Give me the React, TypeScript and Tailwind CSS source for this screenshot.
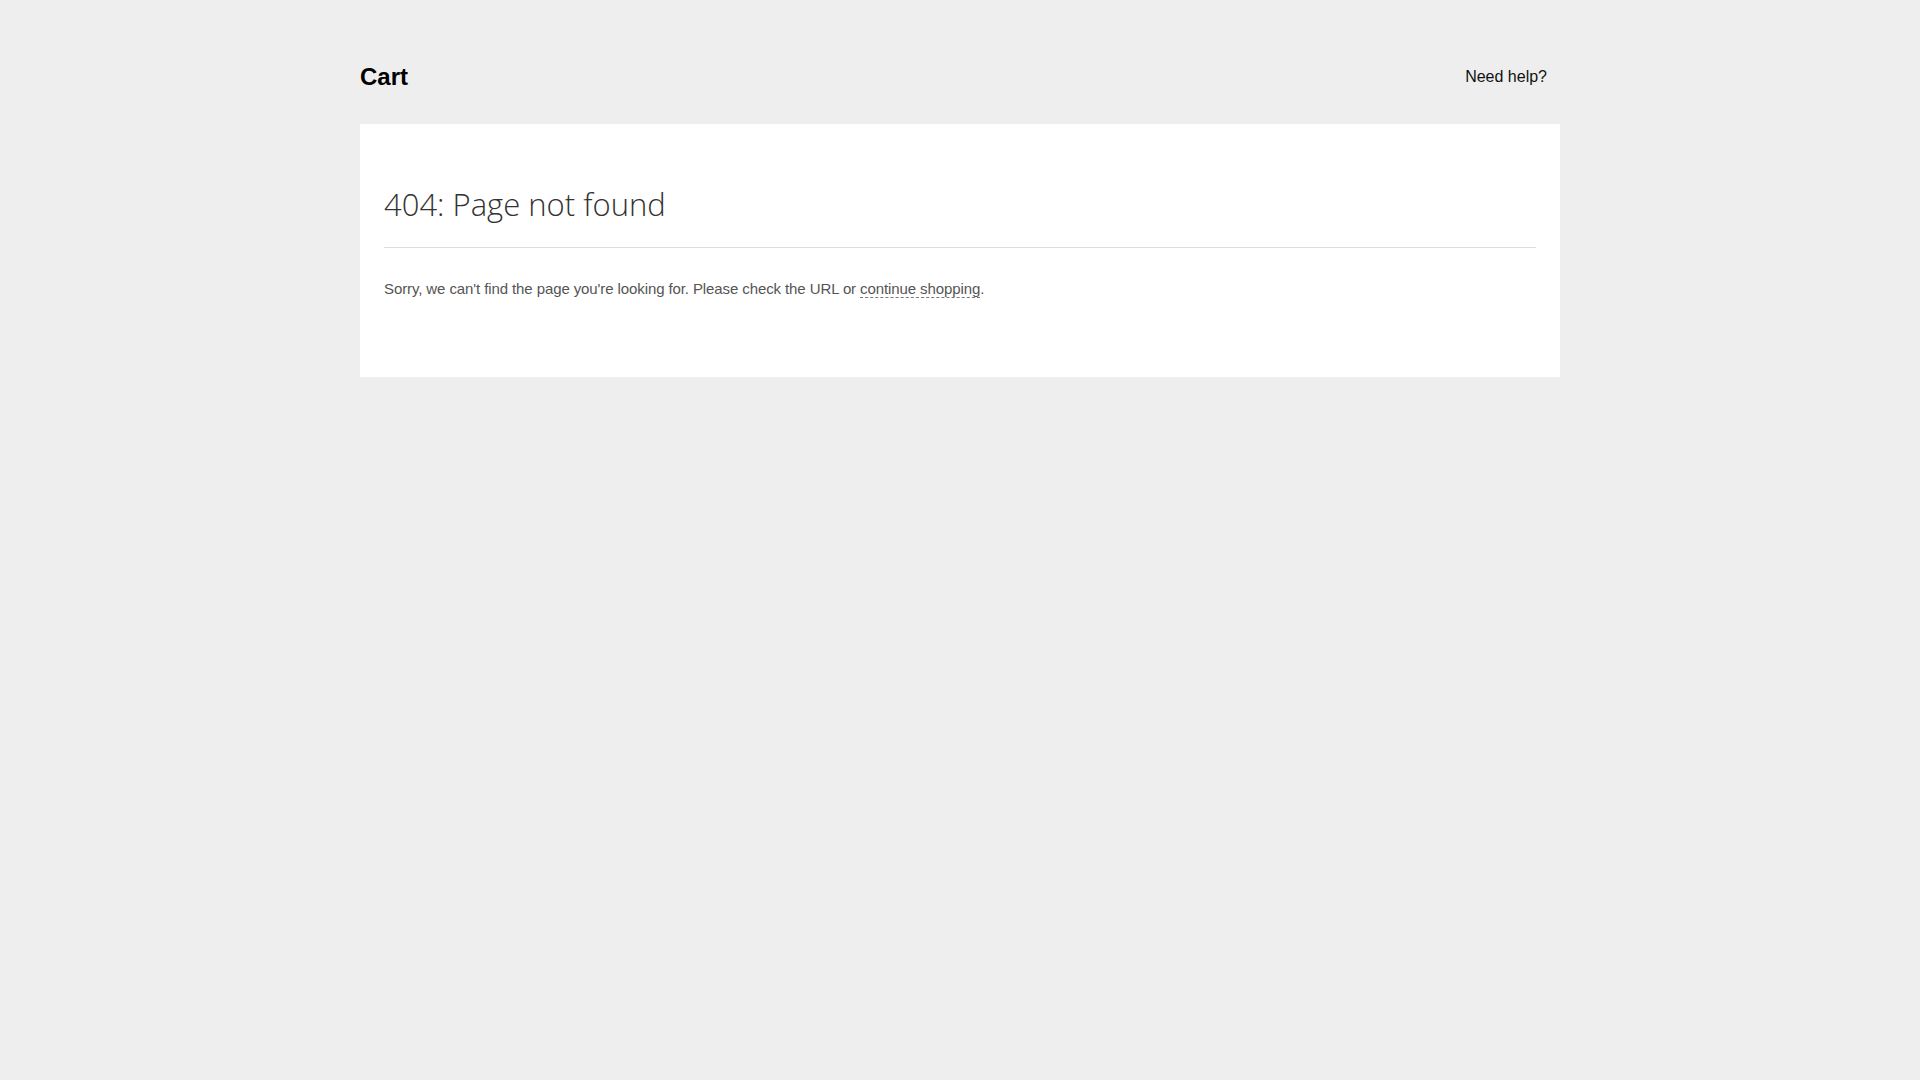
export default function App() {
  return (
    <div className="min-h-screen bg-[#eeeeee] font-['Liberation_Sans',Arial,sans-serif]">
      <div className="mx-auto w-[1200px]">
        <header className="flex h-[124px] items-center justify-between pt-[30px]">
          <h1 className="text-[24px] font-bold leading-none text-black">Cart</h1>
          <a href="#" className="mr-[13px] text-[16px] leading-none text-[#111]">
            Need help?
          </a>
        </header>
        <main className="bg-white px-6 pt-[60px] pb-[77px]">
          <h2 className="border-b border-[#dddddd] pb-[23px] font-['Open_Sans',sans-serif] text-[31px] font-light leading-[40px] text-[#333]">
            404: Page not found
          </h2>
          <p className="mt-[30px] text-[15px] leading-[22px] tracking-[-0.1px] text-[#555]">
            Sorry, we can&apos;t find the page you&apos;re looking for. Please check the URL or{" "}
            <a href="#" className="border-b border-dashed border-[#777] text-[#555]">
              continue shopping
            </a>
            .
          </p>
        </main>
      </div>
    </div>
  );
}
